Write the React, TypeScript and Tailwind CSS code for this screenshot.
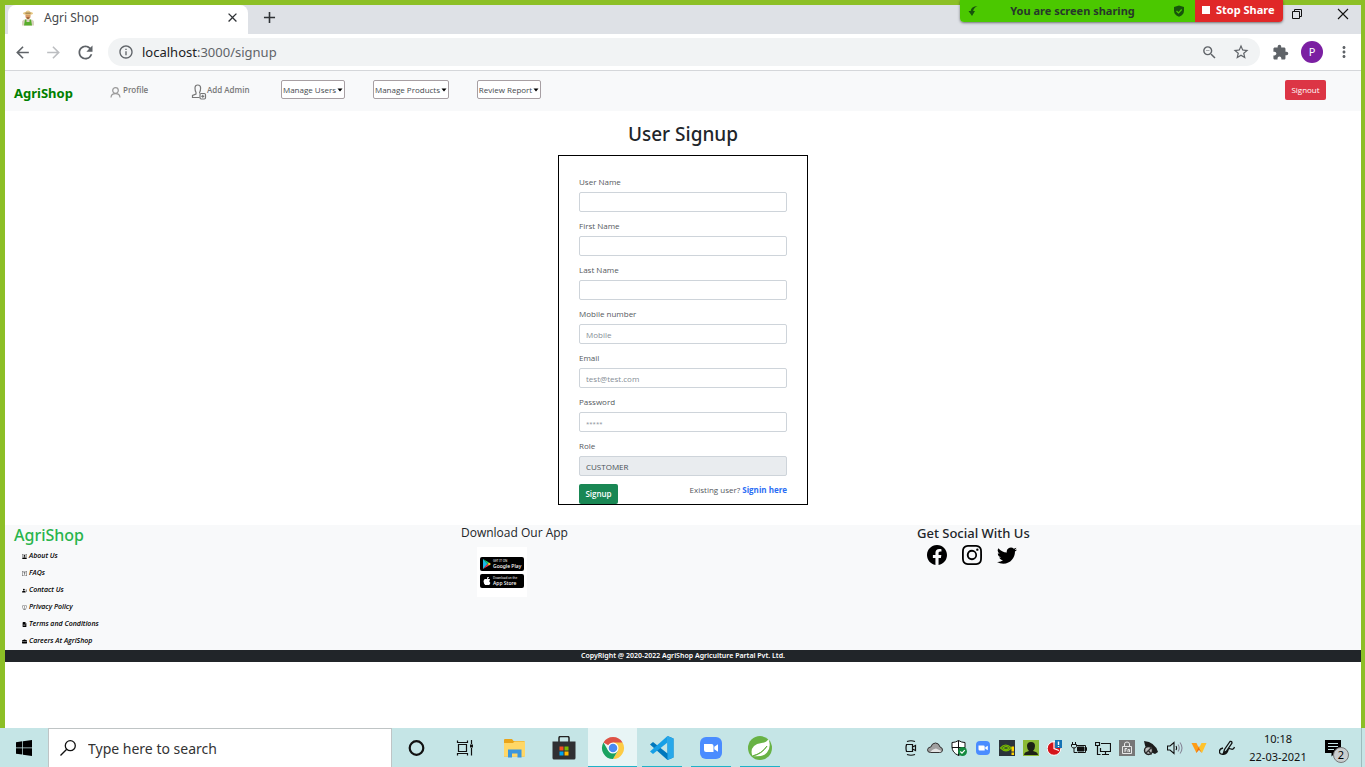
import React from "react";
import {
  MdArrowBack,
  MdArrowForward,
  MdRefresh,
  MdInfoOutline,
  MdZoomOut,
  MdStarBorder,
  MdExtension,
  MdMoreVert,
  MdClose,
  MdAdd,
} from "react-icons/md";
import {
  BsFacebook,
  BsInstagram,
  BsTwitter,
  BsPersonSquare,
  BsQuestionSquare,
  BsPersonLinesFill,
  BsShieldExclamation,
  BsFileEarmarkTextFill,
  BsBriefcaseFill,
  BsApple,
} from "react-icons/bs";

function FarmerIcon() {
  return (
    <svg viewBox="0 0 16 16" className="h-4 w-4" aria-hidden="true">
      <path d="M2 15.5V12q0-2 3-2.500h6q3 .5 3 2.500v3.500z" fill="#d9d2c0" />
      <path d="M5 9.500h1.500v2.500h3V9.500H11l1 6H4z" fill="#58ad2c" />
      <ellipse cx="8" cy="5.800" rx="2.600" ry="3.400" fill="#d99a66" />
      <path d="M6.300 7.200h3.400L8 9.600z" fill="#8c5a34" />
      <ellipse cx="8" cy="3.400" rx="5" ry="1.300" fill="#e6c77f" />
      <path d="M5.400 3.200Q5.600.4 8 .4t2.600 2.800z" fill="#e8cb88" />
      <path d="M5.400 2.700h5.200v.8H5.400z" fill="#70542f" />
    </svg>
  );
}

function TabStrip() {
  return (
    <div className="flex h-[29px] shrink-0 items-stretch bg-[#dee1e6]">
      <div className="ml-[3px] flex w-[240px] items-center rounded-t-lg bg-white pr-2 pb-1 pl-3">
        <FarmerIcon />
        <span className="ml-2 flex-1 text-[12px] leading-5 text-[#45484d]">Agri Shop</span>
        <button aria-label="Close tab" className="text-[15px] text-[#2f3236]">
          <MdClose />
        </button>
      </div>
      <button aria-label="New tab" className="mb-1 ml-3 text-[19px] text-[#2f3236]">
        <MdAdd />
      </button>
      <div className="mr-3 mb-3 ml-auto flex items-center gap-[34px]">
        <button aria-label="Restore window">
          <svg viewBox="0 0 12 12" className="h-3 w-3" fill="none" stroke="#111">
            <path d="M1.500 3.500h7v7h-7zM3.500 3.500v-2h7v7h-2" />
          </svg>
        </button>
        <button aria-label="Close window">
          <svg viewBox="0 0 12 12" className="h-3 w-3" fill="none" stroke="#111" strokeWidth="1.100">
            <path d="M1 1l10 10M11 1L1 11" />
          </svg>
        </button>
      </div>
    </div>
  );
}

function AddressBar() {
  return (
    <div className="flex h-[37px] shrink-0 items-center border-b border-[#d5d7da] bg-white pr-2 pl-2 text-[#5f6368]">
      <button aria-label="Back" className="text-[19px]"><MdArrowBack /></button>
      <button aria-label="Forward" className="ml-3 text-[19px] text-[#bcbec1]"><MdArrowForward /></button>
      <button aria-label="Reload" className="ml-3 text-[21px]"><MdRefresh /></button>
      <div className="ml-3 flex h-7 flex-1 items-center rounded-full bg-[#f1f3f4] pr-2.5 pl-2.5">
        <MdInfoOutline className="text-[16px]" />
        <div role="textbox" aria-label="Address" className="ml-2 flex-1 text-[13px] leading-5">
          <span className="text-[#202124]">localhost</span>:3000/signup
        </div>
        <button aria-label="Zoom" className="text-[17px]"><MdZoomOut /></button>
        <button aria-label="Bookmark" className="ml-3.5 text-[18px]"><MdStarBorder /></button>
      </div>
      <button aria-label="Extensions" className="ml-3 text-[17px]"><MdExtension /></button>
      <button aria-label="Account" className="ml-3 h-[22px] w-[22px] rounded-full bg-[#7b1fa2] text-[11px] leading-[22px] text-white">P</button>
      <button aria-label="Menu" className="ml-3 text-[18px]"><MdMoreVert /></button>
    </div>
  );
}

function MenuButton({ label, width }: { label: string; width: string }) {
  return (
    <button className={`flex h-[19px] items-center justify-center gap-px rounded-xs border border-[#a79fa3] bg-white text-[8px] leading-3 text-[#45494e] ${width}`}>
      {label}
      <svg viewBox="0 0 6 4" className="h-1 w-1.5" aria-hidden="true"><path d="M.5.5h5L3 3.500z" fill="#000" /></svg>
    </button>
  );
}

function NavBar() {
  return (
    <nav className="flex h-10 shrink-0 items-start bg-[#f8f9fa] pl-[9px] pt-[9px] pr-[35px] font-['Open_Sans','Noto_Sans',sans-serif] text-[8px]">
      <a href="#home" className="w-24 pt-1 font-['Noto_Sans','Open_Sans',sans-serif] text-[13px] leading-[18px] font-bold text-[#008000]">AgriShop</a>
      <a href="#profile" className="flex w-[81px] items-start gap-0.5 pt-1 leading-3 font-semibold text-[#777]">
        <svg viewBox="0 0 11 12" className="mt-0.5 h-3 w-[11px]" fill="none" stroke="#999" strokeWidth="1.200" aria-hidden="true">
          <circle cx="5.500" cy="4.500" r="2.800" />
          <path d="M1 11.500q.2-3.800 4.500-3.800T10 11.500" />
        </svg>
        Profile
      </a>
      <a href="#add-admin" className="flex w-[90px] items-start pt-1 leading-3 font-semibold text-[#777]">
        <svg viewBox="0 0 16 16" className="h-4 w-4" fill="none" stroke="#777" strokeWidth="1.200" aria-hidden="true">
          <path d="M8.500 13.500H1.500v-2l3.500-1.500V8.500Q4 7 4 4q0-3 2.800-3t2.800 3q0 3-1 4.500v1" />
          <rect x="9" y="9.500" width="5.500" height="5.500" rx="1.200" />
          <path d="M11.750 10.800v3M10.250 12.300h3" />
        </svg>
        Add Admin
      </a>
      <div className="w-[92px]"><MenuButton label="Manage Users" width="w-16" /></div>
      <div className="w-[104px]"><MenuButton label="Manage Products" width="w-[76px]" /></div>
      <MenuButton label="Review Report" width="w-16" />
      <button className="ml-auto h-5 w-[41px] rounded-xs bg-[#dc3545] text-[8px] text-white">Signout</button>
    </nav>
  );
}

interface FieldDef {
  id: string;
  label: string;
  placeholder?: string;
  value?: string;
  type?: string;
}

const fields: FieldDef[] = [
  { id: "username", label: "User Name" },
  { id: "firstname", label: "First Name" },
  { id: "lastname", label: "Last Name" },
  { id: "mobile", label: "Mobile number", placeholder: "Mobile", type: "tel" },
  { id: "email", label: "Email", placeholder: "test@test.com", type: "email" },
  { id: "password", label: "Password", placeholder: "*****", type: "password" },
  { id: "role", label: "Role", value: "CUSTOMER" },
];

function SignupForm() {
  return (
    <main className="flex flex-col items-center">
      <h1 className="mt-2 text-[19px] leading-[30px] font-medium text-[#212529]">User Signup</h1>
      <form
        className="mt-1.5 flex w-[250px] flex-col gap-2 border border-black px-5 pt-5 font-['Open_Sans','Noto_Sans',sans-serif] text-[8px] text-[#55595e]"
        onSubmit={(e) => e.preventDefault()}
      >
        {fields.map((f) => (
          <div key={f.id} className="flex flex-col gap-1">
            <label htmlFor={f.id} className="leading-3">{f.label}</label>
            <input
              id={f.id}
              type={f.type ?? "text"}
              placeholder={f.placeholder}
              defaultValue={f.value}
              readOnly={f.value !== undefined}
              className={`h-5 rounded-xs border border-[#ced4da] bg-white px-1.5 text-[#495057] placeholder:text-[#868e96] read-only:bg-[#e9ecef] ${f.type === "password" ? "placeholder:text-[6px]" : ""}`}
            />
          </div>
        ))}
        <div className="flex items-start justify-between">
          <button className="h-5 w-[39px] rounded-xs bg-[#198754] font-semibold text-white">Signup</button>
          <p className="leading-3">
            Existing user? <a href="#signin" className="font-bold text-[#2a6df5]">Signin here</a>
          </p>
        </div>
      </form>
    </main>
  );
}

const links = [
  { label: "About Us", Icon: BsPersonSquare },
  { label: "FAQs", Icon: BsQuestionSquare },
  { label: "Contact Us", Icon: BsPersonLinesFill },
  { label: "Privacy Policy", Icon: BsShieldExclamation },
  { label: "Terms and Conditions", Icon: BsFileEarmarkTextFill },
  { label: "Careers At AgriShop", Icon: BsBriefcaseFill },
];

function StoreBadges() {
  return (
    <div className="mt-1.5 ml-4 flex h-[50px] w-[50px] flex-col justify-center gap-[3px] bg-white px-[3px] text-white">
      <a href="#google-play" className="flex h-3.5 items-center gap-0.5 rounded-xs bg-black pl-[3px]">
        <svg viewBox="0 0 8 10" className="h-2.5 w-2 shrink-0" aria-hidden="true">
          <path d="M0 0v10l4.500-5z" fill="#19b9e8" />
          <path d="M0 0l6 3.500L4.500 5z" fill="#12d67b" />
          <path d="M0 10l6-3.500L4.500 5z" fill="#ef3d50" />
          <path d="M6 3.500L8 5 6 6.500 4.500 5z" fill="#ffc92e" />
        </svg>
        <span className="flex flex-col whitespace-nowrap">
          <span className="text-[3px] leading-[4px]">GET IT ON</span>
          <span className="text-[5px] leading-[6px] font-medium">Google Play</span>
        </span>
      </a>
      <a href="#app-store" className="flex h-3.5 items-center gap-0.5 rounded-xs bg-black pl-[3px]">
        <BsApple className="h-2 w-2 shrink-0" />
        <span className="flex flex-col whitespace-nowrap">
          <span className="text-[3px] leading-[4px]">Download on the</span>
          <span className="text-[5px] leading-[6px] font-medium">App Store</span>
        </span>
      </a>
    </div>
  );
}

function PageFooter() {
  return (
    <footer className="mt-5">
      <div className="grid grid-cols-3 bg-[#f8f9fa] text-[#212529]">
        <div className="pl-[9px]">
          <h2 className="text-[16px] leading-5 font-medium text-[#28b44c]">AgriShop</h2>
          <ul className="pt-[3px] pl-2">
            {links.map(({ label, Icon }) => (
              <li key={label} className="h-[17px]">
                <a href="#info" className="flex items-center gap-0.5 font-['Open_Sans','Noto_Sans',sans-serif] text-[7px] leading-4 font-semibold text-black italic">
                  <Icon className="h-[5px] w-[5px]" />
                  {label}
                </a>
              </li>
            ))}
          </ul>
        </div>
        <div className="pl-1">
          <h2 className="font-['Open_Sans','Noto_Sans',sans-serif] text-[12px] leading-4 font-medium">Download Our App</h2>
          <StoreBadges />
        </div>
        <div className="pl-2">
          <h2 className="text-[13px] leading-4 font-medium">Get Social With Us</h2>
          <div className="mt-1 ml-2.5 flex gap-[15px] text-[20px] text-black">
            <a href="#facebook" aria-label="Facebook"><BsFacebook /></a>
            <a href="#instagram" aria-label="Instagram"><BsInstagram /></a>
            <a href="#twitter" aria-label="Twitter"><BsTwitter /></a>
          </div>
        </div>
      </div>
      <p className="bg-[#212529] text-center text-[7px] leading-3 font-semibold text-white">CopyRight @ 2020-2022 AgriShop Agriculture Partal Pvt. Ltd.</p>
    </footer>
  );
}

function ShareBar() {
  return (
    <div className="absolute top-0 right-[82px] flex h-[22px] w-[323px] items-stretch overflow-hidden rounded-b-sm text-[11px] font-bold shadow-sm shadow-black/40">
      <div className="flex flex-1 items-center bg-[#4bc800] pr-2.5 pl-2 text-[#26382a]">
        <svg viewBox="0 0 10 12" className="h-3 w-2.5" aria-hidden="true">
          <path d="M9.500 1Q3 1.500 2.700 6H.5L4 11l3-5H5.200Q5.500 3 9.500 1z" fill="#17540c" />
        </svg>
        <span className="flex-1 pr-1.5 text-center">You are screen sharing</span>
        <svg viewBox="0 0 12 12" className="h-3 w-3" aria-hidden="true">
          <path d="M6 .5L11 2v3.500Q11 10 6 11.700 1 10 1 5.500V2z" fill="#17540c" />
          <path d="M3.500 6l2 2 3.200-3.500" fill="none" stroke="#4bc800" strokeWidth="1.200" />
        </svg>
      </div>
      <button className="flex w-[88px] items-center gap-1.5 bg-[#e02828] pb-0.5 pl-[7px] text-white">
        <span className="h-2 w-2 bg-white" />
        Stop Share
      </button>
    </div>
  );
}

const StartIcon = () => (
  <svg viewBox="0 0 16 16" className="h-4 w-4" aria-hidden="true">
    <path d="M0 2.200L6.300 1.300v6.200H0zM7 1.200L16 0v7.500H7zM0 8.300h6.300v6.300L0 13.700zM7 8.300h9V16l-9-1.300z" fill="#000" />
  </svg>
);

const SearchIcon = () => (
  <svg viewBox="0 0 16 16" className="h-4 w-4" fill="none" stroke="#111" strokeWidth="1.300" aria-hidden="true">
    <circle cx="10.300" cy="5.700" r="5" />
    <path d="M6.700 9.300L.5 15.500" />
  </svg>
);

const apps: { name: string; active?: boolean; open?: boolean; art: React.ReactNode }[] = [
  { name: "Cortana", art: <circle cx="11.500" cy="12" r="6.800" fill="none" stroke="#111" strokeWidth="2.200" /> },
  {
    name: "Task View",
    art: (
      <g fill="none" stroke="#111" strokeWidth="1.200">
        <path d="M4.500 8.500h8v7h-8zM3.500 4.500v2h10v-2M3.500 19.500v-2h10v2M17.500 4v4M17.500 12v7.500" />
        <path d="M16 8.500h3v3h-3z" fill="#111" stroke="none" />
      </g>
    ),
  },
  {
    name: "File Explorer",
    art: (
      <g>
        <path d="M1 4q0-1 1-1h7l1.500 2h11v15.500H1z" fill="#e9a41a" />
        <path d="M1 7h9l1.500-1.500h10.500v15H1z" fill="#ffd766" />
        <path d="M5 13.500h13.500V21.500h-4v-4H9v4H5z" fill="#3a96dd" />
      </g>
    ),
  },
  {
    name: "Microsoft Store",
    art: (
      <g>
        <path d="M7 6V2q0-1.500 1.500-1.500h7Q17 .5 17 2v4" fill="none" stroke="#222" strokeWidth="1.500" />
        <path d="M.5 5.500h23V22q0 1.500-1.500 1.500H2Q.5 23.500.5 22z" fill="#2f3033" />
        <path d="M7.500 10.500h4v4h-4z" fill="#f25022" />
        <path d="M12.500 10.500h4v4h-4z" fill="#7fba00" />
        <path d="M7.500 15.500h4v4h-4z" fill="#00a4ef" />
        <path d="M12.500 15.500h4v4h-4z" fill="#ffb900" />
      </g>
    ),
  },
  {
    name: "Google Chrome",
    active: true,
    open: true,
    art: (
      <g>
        <path d="M12 12L2.470 6.500A11 11 0 0 1 21.530 6.500z" fill="#de5246" />
        <path d="M12 6.500h9.530A11 11 0 0 1 12 23l4.760-8.250z" fill="#fdcb45" />
        <path d="M2.470 6.500A11 11 0 0 0 12 23l4.760-8.250L12 12 7.240 14.750z" fill="#1aa260" />
        <circle cx="12" cy="12" r="5.500" fill="#fff" />
        <circle cx="12" cy="12" r="4.300" fill="#4a8af4" />
      </g>
    ),
  },
  {
    name: "Visual Studio Code",
    open: true,
    art: (
      <g>
        <path d="M17.500 0l6 2.500v19l-6 2.500L0 8.500l3-2.500L17.500 17.500z" fill="#0078bd" />
        <path d="M17.500 0v6.500L3 18 0 15.500z" fill="#169fe6" />
        <path d="M17.500 0l6 2.500v19l-6 2.500z" fill="#28a8ea" />
      </g>
    ),
  },
  {
    name: "Zoom",
    open: true,
    art: (
      <g>
        <rect x="1" y="1" width="22" height="22" rx="6" fill="#4a8cff" />
        <path d="M5 8h7.500q2 0 2 2v6H7q-2 0-2-2zM15.300 10.700L19 8.200v7.600l-3.700-2.500z" fill="#fff" />
      </g>
    ),
  },
  {
    name: "Spring Tools",
    open: true,
    art: (
      <g>
        <circle cx="12" cy="12" r="12" fill="#68b245" />
        <path d="M20.500 3q3 8-1.500 13.500-4 5-14.500 3.500Q2 14 6 10q2.500-2.500 7.500-3Q18.500 6.500 20.500 3z" fill="#fff" />
        <path d="M4.500 20q9.500-2 14.500-10-5 7.500-14.500 10z" fill="#68b245" stroke="#68b245" />
      </g>
    ),
  },
];

const tray: { name: string; art: React.ReactNode }[] = [
  {
    name: "Meet Now",
    art: <path d="M3.500 4.500h6v7h-6q-1-3.500 0-7zM9.500 7l3-1.500v5L9.500 9M4 1.500q4-1.500 8 0M4 14.500q4 1.500 8 0" fill="none" stroke="#111" strokeWidth="1.200" />,
  },
  {
    name: "OneDrive",
    art: (
      <g>
        <path d="M3.500 12.500Q.5 12.500.5 9.800 1 7 3.800 7 5 3 8.500 3q3.500 0 4.500 4 2.500.5 2.500 3t-3 2.500z" fill="#a0a0a0" stroke="#333" />
        <path d="M3.500 12Q5 9 9 8.500l5.500 2.500q-.5 1-2 1z" fill="#e4e4e4" />
      </g>
    ),
  },
  {
    name: "Windows Security",
    art: (
      <g>
        <path d="M7.500.5q3 2 6.500 2V7q0 5.500-6.500 8.500Q1 12.500 1 7V2.500q3.500 0 6.500-2z" fill="#fff" stroke="#111" />
        <path d="M7.500.5v15M1 7.500h13" stroke="#111" />
        <circle cx="11.500" cy="11.500" r="4.500" fill="#138a3e" />
        <path d="M9.300 11.500l1.700 1.700 2.800-3" fill="none" stroke="#fff" strokeWidth="1.200" />
      </g>
    ),
  },
  {
    name: "Zoom",
    art: (
      <g>
        <rect x="1" y="1" width="14" height="14" rx="4" fill="#4a8cff" />
        <path d="M3.500 5.500h5q1.200 0 1.200 1.200v3.800h-5q-1.200 0-1.200-1.200zM10.300 7.200l2.500-1.500v4.600l-2.500-1.500z" fill="#fff" />
      </g>
    ),
  },
  {
    name: "NVIDIA",
    art: (
      <g>
        <path d="M0 0h16v16H0z" fill="#2b333b" />
        <path d="M1.500 8q5-6 11 0-5.500 5.500-11 0zM4 8q3-3 6 0-3 3-6 0z" fill="none" stroke="#76b900" strokeWidth="1.200" />
        <path d="M12.500 6.500h2.500v5h-2.500zM12.500 12.500h2.500v2.500h-2.500z" fill="#ffd400" />
      </g>
    ),
  },
  {
    name: "User",
    art: (
      <g>
        <path d="M0 0h16v16H0z" fill="#8cba36" />
        <path d="M1 15q0-3 5-4-2-2-2-5 0-4 4-4t4 4q0 3-2 5 5 1 5 4z" fill="#1d2116" />
      </g>
    ),
  },
  {
    name: "Alert",
    art: (
      <g>
        <circle cx="7" cy="8.500" r="6.800" fill="#d5151b" stroke="#fff" />
        <path d="M7 1v7.500l5 2" fill="none" stroke="#fff" strokeWidth="1.200" />
        <path d="M8 0h7v8H8z" fill="#1673b5" />
        <path d="M11.500 1.500v3.500M11.500 6v1" stroke="#fff" strokeWidth="1.400" />
      </g>
    ),
  },
  {
    name: "Power",
    art: (
      <g fill="none" stroke="#111">
        <path d="M5 5.500h9.500v7h-8M14.500 7.500h1v3h-1M1.500 2v2.500M4.500 2v2.500M.5 4.500h5v2Q5 8 3 8 1 8 .5 6.500zM3 8v4.500h3" />
        <path d="M6.500 7h6.500v4H6.500z" fill="#111" />
      </g>
    ),
  },
  {
    name: "Network",
    art: <path d="M6 3.500h9.500v8h-10V8M10.500 11.500v3M7 14.500h7M.5 2.500h4v3h-4zM2.500 5.500v9h3" fill="none" stroke="#111" strokeWidth="1.200" />,
  },
  {
    name: "Function lock",
    art: (
      <g>
        <path d="M0 0h16v16H0z" fill="#777" />
        <path d="M3.500 6.500h9v7h-9zM5.500 6.500V4q0-2 2.500-2t2.500 2v2.500M6 12V8.500h2M6 10h1.500M9 12V9.500h1.500V12" fill="none" stroke="#e8e8e8" />
      </g>
    ),
  },
  {
    name: "Audio device",
    art: (
      <g>
        <path d="M1 1q11 1 14 11l-3 2Q2 11 1 1z" fill="#1c1c1c" />
        <circle cx="5.500" cy="10.500" r="4" fill="#bbb" stroke="#222" strokeWidth="1.400" />
        <path d="M3 13l6-6M5.500 10.500l3 4" stroke="#333" strokeWidth="1.300" />
      </g>
    ),
  },
  {
    name: "Volume",
    art: (
      <g fill="none" stroke="#111" strokeWidth="1.100">
        <path d="M.5 6h2.500L7 2.500v11L3 10H.5zM9 6q1.200 2 0 4" />
        <path d="M11 4.500q2.500 3.500 0 7M13 2.500q4 5.500 0 11" stroke="#889" />
      </g>
    ),
  },
  {
    name: "Office",
    art: (
      <g>
        <path d="M.5 3h5L8 8.500 5.500 13z" fill="#ff9d16" />
        <path d="M5 13l3-7 3 7-3-3z" fill="#ee6f0e" />
        <path d="M15.500 3h-5L8 8l3 5z" fill="#ffc32b" />
      </g>
    ),
  },
];

function Taskbar() {
  return (
    <div className="flex h-[39px] shrink-0 items-stretch bg-[#c5e5e6]">
      <button aria-label="Start" className="flex w-12 items-center justify-center"><StartIcon /></button>
      <div className="flex w-[344px] items-center gap-3 border border-b-0 border-[#bfc4c5] bg-white pl-[11px]">
        <SearchIcon />
        <input aria-label="Search" placeholder="Type here to search" className="min-w-0 flex-1 bg-transparent text-[14px] placeholder:text-[#333]" />
      </div>
      <div className="flex">
        {apps.map((a) => (
          <button
            key={a.name}
            aria-label={a.name}
            className={`flex w-[49px] flex-col items-center justify-end ${a.active ? "bg-[#e8f5f5]" : ""}`}
          >
            <span className="flex flex-1 items-center pt-0.5">
              <svg viewBox="0 0 24 24" className="h-6 w-6" aria-hidden="true">{a.art}</svg>
            </span>
            <span className={`h-px ${a.active ? "w-full" : "w-10"} ${a.open ? "bg-[#20b2c8]" : ""}`} />
          </button>
        ))}
      </div>
      <div className="ml-auto flex items-center">
        {tray.map((t) => (
          <button key={t.name} aria-label={t.name} className="flex w-6 justify-center">
            <svg viewBox="0 0 16 16" className="h-4 w-4" aria-hidden="true">{t.art}</svg>
          </button>
        ))}
        <button aria-label="Pen" className="flex w-8 justify-center">
          <svg viewBox="0 0 16 16" className="h-4 w-4" fill="none" stroke="#111" strokeWidth="1.300" aria-hidden="true">
            <path d="M4.500 13L5.500 9.500 11 1.500q2-.5 2 1.500L7.500 11zM4 8Q0 9 .5 12t5 2Q8 13.500 9 10q.5-2 3-1t3.500-2" />
          </svg>
        </button>
        <div className="w-[70px] text-center text-[11px] leading-[18px] text-[#111]">
          <div>10:18</div>
          <div className="whitespace-nowrap">22-03-2021</div>
        </div>
        <button aria-label="Notifications" className="relative mr-2 flex w-10 justify-center">
          <svg viewBox="0 0 18 18" className="h-[18px] w-[18px]" aria-hidden="true">
            <path d="M1 1h16v13h-6l-3.500 3.500V14H1z" fill="#000" />
            <path d="M4 4.500h10M4 7.500h10M4 10.500h6" stroke="#c5e5e6" strokeWidth="1.200" />
          </svg>
          <span className="absolute top-2 left-5 h-4 w-4 rounded-full border border-[#777] bg-[#c9cecf] text-center text-[11px] leading-3.5 text-black">2</span>
        </button>
        <span className="h-full w-1 border-l border-[#9dbcbd]" />
      </div>
    </div>
  );
}

export default function App() {
  return (
    <div className="relative flex min-h-screen flex-col bg-white font-['Noto_Sans','Open_Sans',sans-serif]">
      <div className="flex flex-1 flex-col border-t-[5px] border-r-4 border-l-[5px] border-[#8cbf26]">
        <TabStrip />
        <AddressBar />
        <NavBar />
        <SignupForm />
        <PageFooter />
      </div>
      <ShareBar />
      <Taskbar />
    </div>
  );
}
